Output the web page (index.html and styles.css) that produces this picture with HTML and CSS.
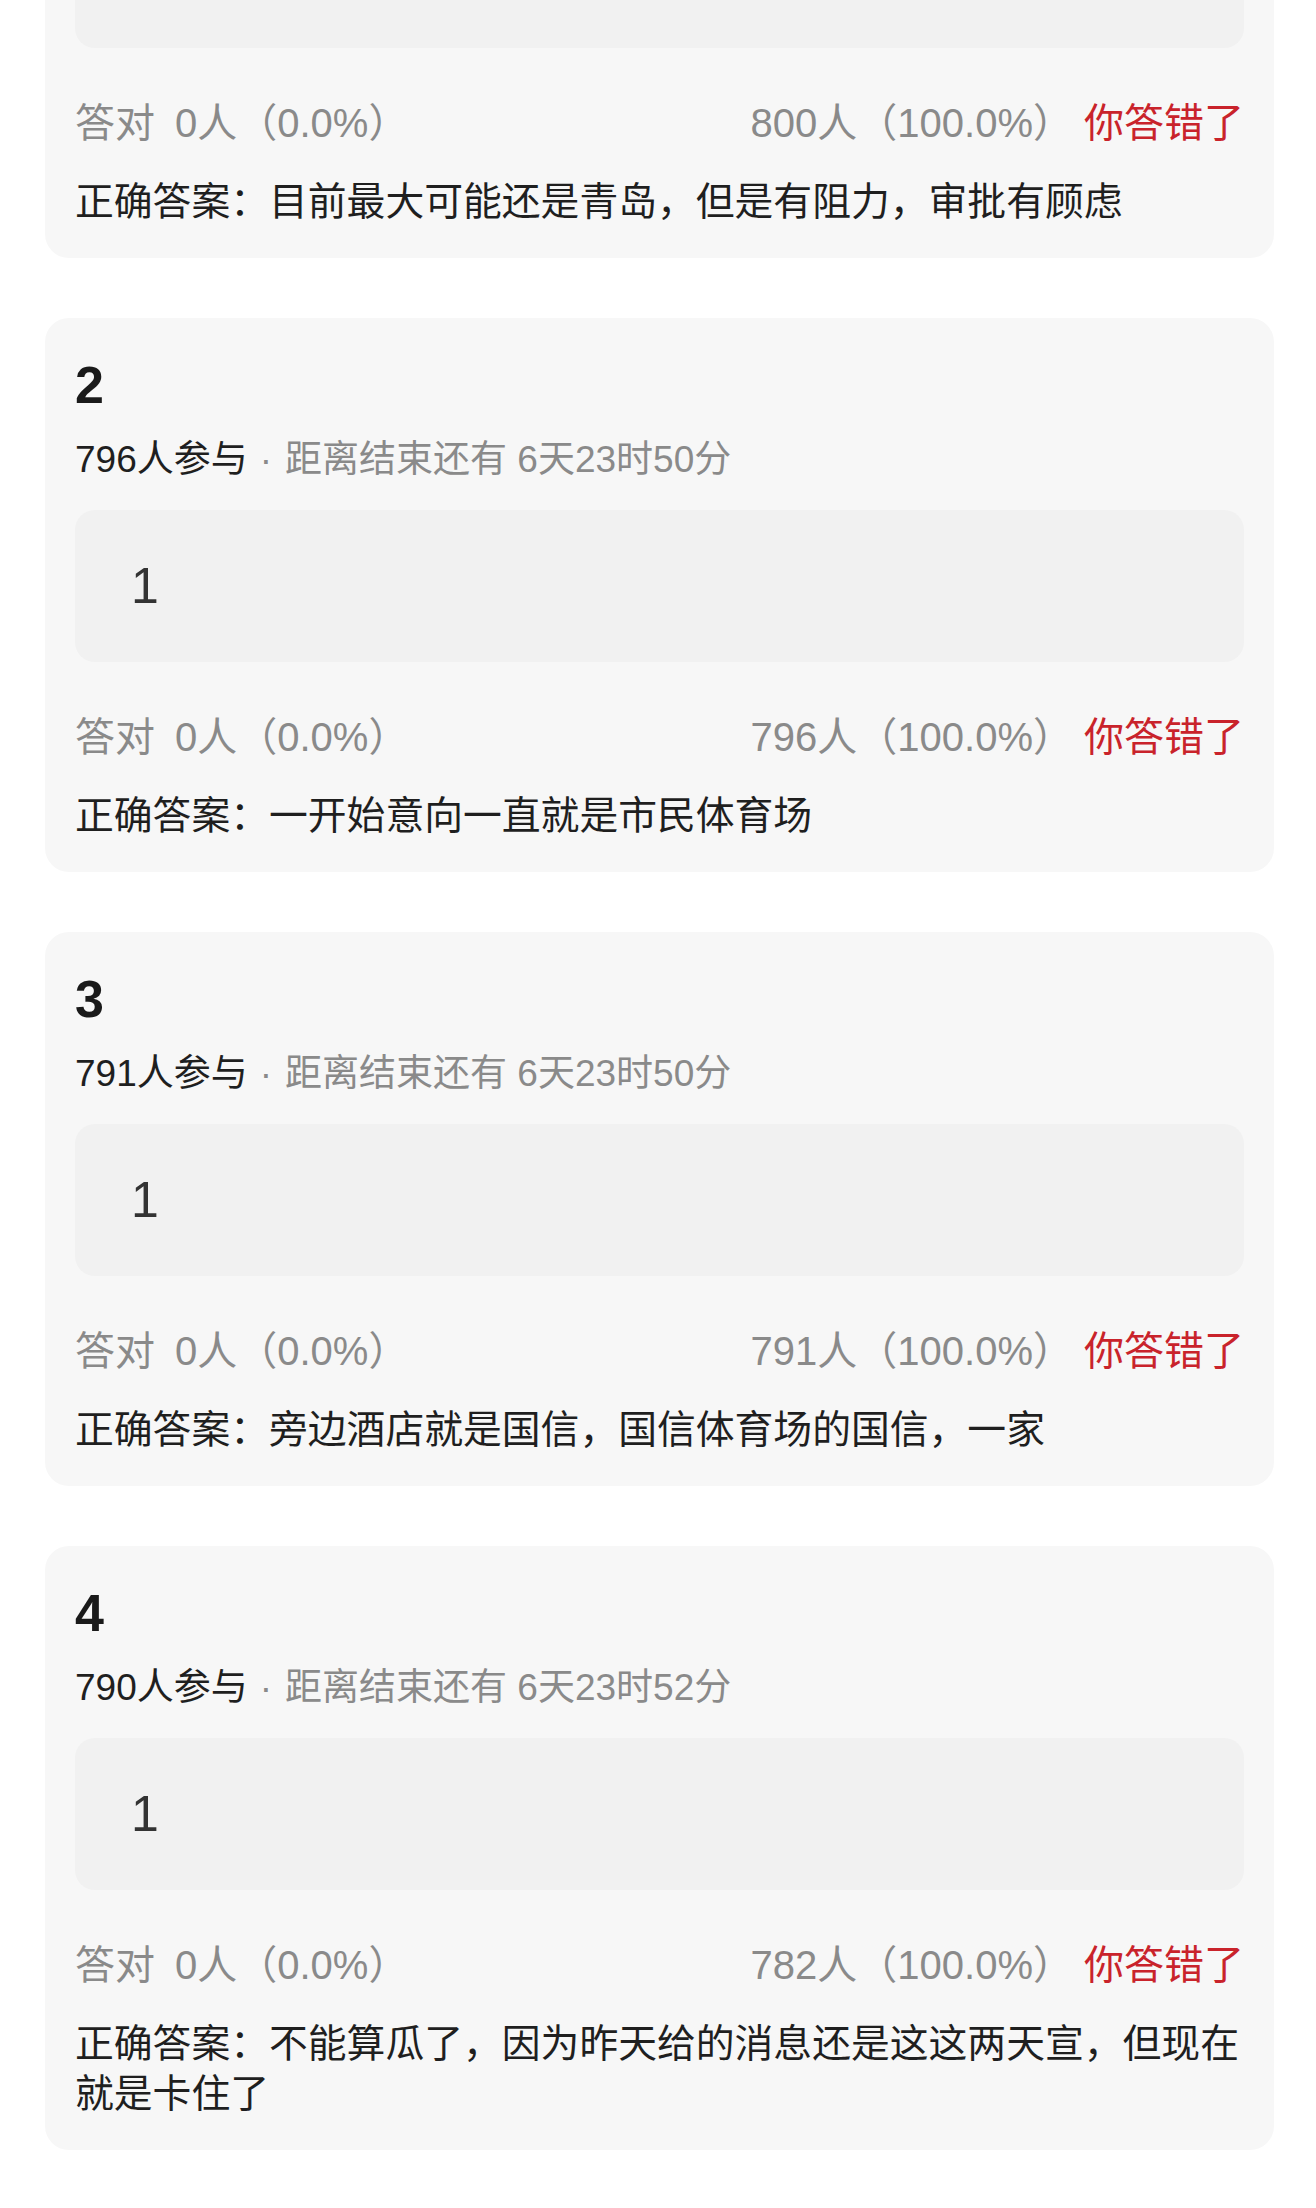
FILE: index.html
```html
<!DOCTYPE html>
<html lang="zh-CN">
<head>
<meta charset="utf-8">
<title>答题结果</title>
<link rel="stylesheet" href="styles.css">
</head>
<body>
<main class="list">
  <section class="card card--cut">
    <div class="card__box card__box--cut"></div>
    <div class="card__stats">
      <div class="stats__left"><span class="stats__label">答对</span><span>0人（0.0%）</span></div>
      <div class="stats__right"><span>800人（100.0%）</span><span class="stats__wrong">你答错了</span></div>
    </div>
    <p class="card__answer"><span class="answer__label">正确答案：</span>目前最大可能还是青岛，但是有阻力，审批有顾虑</p>
  </section>

  <section class="card">
    <h2 class="card__title">2</h2>
    <p class="card__meta"><span class="meta__count">796人参与</span><span class="meta__dot">·</span>距离结束还有 6天23时50分</p>
    <div class="card__box"><span class="card__choice">1</span></div>
    <div class="card__stats">
      <div class="stats__left"><span class="stats__label">答对</span><span>0人（0.0%）</span></div>
      <div class="stats__right"><span>796人（100.0%）</span><span class="stats__wrong">你答错了</span></div>
    </div>
    <p class="card__answer"><span class="answer__label">正确答案：</span>一开始意向一直就是市民体育场</p>
  </section>

  <section class="card">
    <h2 class="card__title">3</h2>
    <p class="card__meta"><span class="meta__count">791人参与</span><span class="meta__dot">·</span>距离结束还有 6天23时50分</p>
    <div class="card__box"><span class="card__choice">1</span></div>
    <div class="card__stats">
      <div class="stats__left"><span class="stats__label">答对</span><span>0人（0.0%）</span></div>
      <div class="stats__right"><span>791人（100.0%）</span><span class="stats__wrong">你答错了</span></div>
    </div>
    <p class="card__answer"><span class="answer__label">正确答案：</span>旁边酒店就是国信，国信体育场的国信，一家</p>
  </section>

  <section class="card">
    <h2 class="card__title">4</h2>
    <p class="card__meta"><span class="meta__count">790人参与</span><span class="meta__dot">·</span>距离结束还有 6天23时52分</p>
    <div class="card__box"><span class="card__choice">1</span></div>
    <div class="card__stats">
      <div class="stats__left"><span class="stats__label">答对</span><span>0人（0.0%）</span></div>
      <div class="stats__right"><span>782人（100.0%）</span><span class="stats__wrong">你答错了</span></div>
    </div>
    <p class="card__answer"><span class="answer__label">正确答案：</span>不能算瓜了，因为昨天给的消息还是这这两天宣，但现在就是卡住了</p>
  </section>
</main>
</body>
</html>
```

FILE: styles.css
```css
* { box-sizing: border-box; }

html, body {
  margin: 0;
  padding: 0;
  background: #ffffff;
}

body {
  font-family: "Liberation Sans", "Noto Sans CJK SC", sans-serif;
  color: #1f1f1f;
}

.list {
  display: flex;
  flex-direction: column;
  gap: 60px;
  padding: 0 42px 0 45px;
}

.card {
  background: #f7f7f7;
  border-radius: 24px;
  padding: 38px 30px 31px;
  display: flex;
  flex-direction: column;
}

.card--cut {
  border-radius: 0 0 24px 24px;
  padding-top: 0;
}

.card__title {
  margin: 0;
  font-size: 52px;
  line-height: 58px;
  font-weight: 700;
  color: #1a1a1a;
}

.card__meta {
  margin: 21px 0 0;
  font-size: 37px;
  line-height: 50px;
  color: #8a8a8a;
}

.meta__count {
  color: #1f1f1f;
}

.meta__dot {
  margin: 0 13px 0 12px;
}

.card__box {
  margin-top: 25px;
  height: 152px;
  background: #f1f1f1;
  border-radius: 20px;
  display: flex;
  align-items: center;
  padding-left: 56px;
}

.card__box--cut {
  margin-top: 0;
  height: 48px;
  border-radius: 0 0 20px 20px;
}

.card__choice {
  font-size: 50px;
  line-height: 60px;
  color: #333333;
}

.card__stats {
  margin-top: 50px;
  display: flex;
  justify-content: space-between;
  font-size: 40px;
  line-height: 50px;
  color: #8a8a8a;
}

.stats__label {
  margin-right: 20px;
}

.stats__wrong {
  margin-left: 11px;
  color: #c9232b;
}

.card__answer {
  margin: 29px 0 0;
  font-size: 38.8px;
  line-height: 50px;
  color: #1f1f1f;
}
```
